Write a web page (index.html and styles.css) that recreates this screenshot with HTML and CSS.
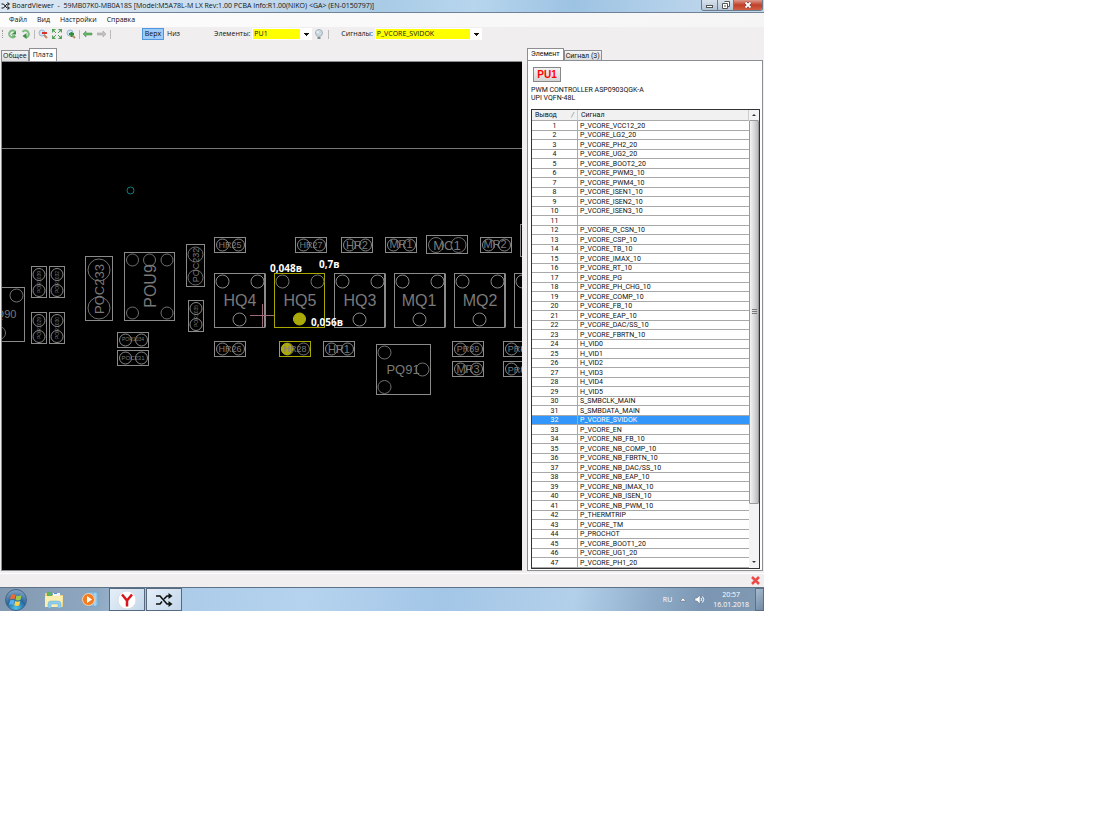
FILE: index.html
```html
<!DOCTYPE html>
<html lang="ru">
<head>
    <meta charset="UTF-8">
    <meta name="viewport" content="width=device-width, initial-scale=1.0">
    <title>BoardViewer</title>
    <link rel="stylesheet" href="styles.css">
</head>
<body>
<div class="desktop">
    <header class="titlebar">
        <svg class="app-icon" width="9" height="8" viewBox="0 0 18 16"><path d="M1 4h4l7 8h3M1 12h4l7-8h3M13 1l4 3-4 3M13 9l4 3-4 3" fill="none" stroke="#111" stroke-width="2"/></svg>
        <h1>BoardViewer&nbsp; -&nbsp; 59MB07K0-MB0A18S [Model:M5A78L-M LX Rev:1.00 PCBA Info:R1.00(NIKO) &lt;GA&gt; (EN-0150797)]</h1>
        <div class="win-buttons">
            <button class="win-btn" aria-label="Свернуть"><svg width="9" height="8"><rect x="1.500" y="4.500" width="6" height="2" fill="#fff" stroke="#555"/></svg></button>
            <button class="win-btn" aria-label="Развернуть"><svg width="9" height="8"><path d="M3.500 .5h5v5h-2M1.500 2.500h5v5h-5z" fill="#fff" stroke="#555"/><path d="M4 4v2" stroke="#555"/></svg></button>
            <button class="win-btn close" aria-label="Закрыть"><svg width="8" height="8"><path d="M1.500 1.500l5 5M6.500 1.500l-5 5" stroke="#622" stroke-width="3"/><path d="M1.500 1.500l5 5M6.500 1.500l-5 5" stroke="#fff" stroke-width="2"/></svg></button>
        </div>
    </header>

    <nav class="menu">
        <a href="#">Файл</a>
        <a href="#">Вид</a>
        <a href="#">Настройки</a>
        <a href="#">Справка</a>
    </nav>

    <div class="toolbar">
        <span class="grip"></span>
        <div class="tools">
            <button class="tool" aria-label="Повернуть влево"><svg width="10" height="10"><path d="M8.500 3A3.500 3.500 0 1 0 8.500 7" fill="none" stroke="#7cbd80" stroke-width="2"/><path d="M4 5.500h5V2z" fill="#3f9146"/><path d="M5 7h3" stroke="#3f9146"/></svg></button>
            <button class="tool" aria-label="Повернуть вправо"><svg width="10" height="10"><path d="M1.500 3A3.500 3.500 0 1 1 5 8.500" fill="none" stroke="#7cbd80" stroke-width="2"/><path d="M5.500 4v6L1.500 7z" fill="#3f9146"/></svg></button>
        </div>
        <span class="sep"></span>
        <div class="tools zoom">
            <button class="tool" aria-label="Уменьшить"><svg width="10" height="10"><circle cx="4" cy="4" r="3" fill="#cde3f5" stroke="#9bb8d0"/><path d="M6 6l3 3" stroke="#b98b62" stroke-width="2"/><path d="M4 4h5" stroke="#d9322b" stroke-width="2"/></svg></button>
            <button class="tool" aria-label="Вписать"><svg width="10" height="10"><path d="M0 0h4L0 4zM10 0v4L6 0zM0 10V6l4 4zM10 10H6l4-4z" fill="#53a45a"/><path d="M1 1l3 3M9 1L6 4M1 9l3-3M9 9L6 6" stroke="#53a45a"/></svg></button>
            <button class="tool" aria-label="Увеличить"><svg width="10" height="10"><circle cx="4" cy="4" r="3" fill="#cde3f5" stroke="#9bb8d0"/><path d="M6 6l3 3" stroke="#b98b62" stroke-width="2"/><path d="M3 5h5M5.500 3v5" stroke="#2e8f37" stroke-width="2"/></svg></button>
        </div>
        <span class="sep"></span>
        <div class="tools arrows">
            <button class="tool" aria-label="Назад"><svg width="10" height="10"><path d="M0 5l3-3v2h6v2H3v2z" fill="#67b56b" stroke="#3f8e46" stroke-width=".5"/></svg></button>
            <button class="tool" aria-label="Вперёд"><svg width="10" height="10"><path d="M9 5L6 2v2H0v2h6v2z" fill="#c4c4c4" stroke="#999" stroke-width=".5"/></svg></button>
        </div>
        <span class="sep"></span>
        <div class="sides">
            <button class="side active">Верх</button>
            <button class="side">Низ</button>
        </div>
        <label class="combo-label" for="element">Элементы:</label>
        <select class="combo" id="element"><option>PU1</option></select>
        <button class="tool lamp" aria-label="Подсветка"><svg width="10" height="11"><circle cx="5" cy="4" r="3.500" fill="#ccd9e0" stroke="#a5b3ba"/><path d="M2 3l2-1 1 2" fill="#fff"/><path d="M3.500 8h3v2h-3z" fill="#7f8f97"/></svg></button>
        <span class="sep"></span>
        <label class="combo-label signals" for="signal">Сигналы:</label>
        <select class="combo wide" id="signal"><option>P_VCORE_SVIDOK</option></select>
    </div>

    <main class="work">
        <section class="left">
            <div class="tabs">
                <button class="tab">Общее</button>
                <button class="tab active">Плата</button>
            </div>
            <div class="board">
                <svg class="pcb">
                    <defs>
                        <g id="res">
                            <rect width="31" height="15"/>
                            <circle cx="8" cy="7.500" r="6"/>
                            <circle cx="24" cy="7.500" r="6"/>
                        </g>
                        <g id="res-v">
                            <rect width="15" height="31"/>
                            <circle cx="7.500" cy="8" r="6"/>
                            <circle cx="7.500" cy="24" r="6"/>
                        </g>
                        <g id="mosfet">
                            <rect width="50" height="54"/>
                            <path d="M51 0v54"/>
                            <circle cx="8" cy="8" r="6.500"/>
                            <circle cx="43" cy="8" r="6.500"/>
                            <circle cx="25" cy="46" r="6.500"/>
                        </g>
                    </defs>
                    <g transform="translate(-2 -62)">
                        <path class="edge" d="M2 148.500H3000"/>
                        <circle class="via" cx="130.500" cy="190.500" r="3.500"/>

                        <g class="part">
                            <rect x="-30.500" y="287.500" width="55" height="54"/>
                            <circle cx="16.500" cy="295.500" r="6.500"/><circle cx="-1" cy="333" r="6.500"/>
                            <use href="#res-v" x="31.500" y="266.500"/><use href="#res-v" x="49.500" y="266.500"/>
                            <use href="#res-v" x="31.500" y="312.500"/><use href="#res-v" x="49.500" y="312.500"/>
                            <rect x="85.500" y="256.500" width="27" height="64"/>
                            <circle cx="99" cy="270" r="11"/><circle cx="99" cy="308" r="11"/>
                            <rect x="124.500" y="252.500" width="50" height="68"/>
                            <circle cx="132.500" cy="260" r="6"/><circle cx="149.500" cy="260" r="6"/><circle cx="167" cy="260" r="6"/>
                            <circle cx="132.500" cy="313" r="6"/><circle cx="167" cy="313" r="6"/>
                            <rect x="186.500" y="244.500" width="18" height="42"/>
                            <circle cx="195.500" cy="254.500" r="7.500"/><circle cx="195.500" cy="277.500" r="7.500"/>
                            <use href="#res-v" x="188.500" y="300.500"/>
                            <use href="#res" x="117.500" y="332.500"/><use href="#res" x="117.500" y="350.500"/>

                            <use href="#res" x="214.500" y="237.500"/><use href="#res" x="295.500" y="237.500"/>
                            <use href="#res" x="341.500" y="237.500"/><use href="#res" x="385.500" y="237.500"/>
                            <rect x="426.500" y="235.500" width="41" height="18"/>
                            <circle cx="436" cy="245" r="7.500"/><circle cx="458.500" cy="245" r="7.500"/>
                            <use href="#res" x="480.500" y="237.500"/>
                            <rect x="520.500" y="224.500" width="40" height="32"/>

                            <use href="#mosfet" x="214.500" y="273.500"/><use href="#mosfet" x="334.500" y="273.500"/>
                            <use href="#mosfet" x="394.500" y="273.500"/><use href="#mosfet" x="454.500" y="273.500"/>
                            <use href="#mosfet" x="514.500" y="273.500"/>

                            <use href="#res" x="214.500" y="341.500"/><use href="#res" x="323.500" y="341.500"/>
                            <use href="#res" x="452.500" y="341.500"/><use href="#res" x="452.500" y="361.500"/>
                            <use href="#res" x="503.500" y="341.500"/><use href="#res" x="503.500" y="361.500"/>
                            <rect x="376.500" y="344.500" width="54" height="50"/>
                            <circle cx="384.500" cy="352.500" r="6.500"/><circle cx="422.500" cy="369.500" r="6.500"/><circle cx="384.500" cy="387" r="6.500"/>
                        </g>

                        <!-- selected net -->
                        <g class="part hot">
                            <use href="#res" x="279.500" y="341.500" class="dim"/>
                            <rect x="274.500" y="273.500" width="50" height="54"/>
                            <rect x="279.500" y="341.500" width="31" height="15"/>
                            <circle class="dim" cx="282.500" cy="281.500" r="6.500"/><circle class="dim" cx="317.500" cy="281.500" r="6.500"/>
                            <circle class="pad" cx="299.500" cy="319" r="6"/><circle class="pad" cx="287" cy="349" r="5.500"/>
                        </g>
                        <path class="cursor" d="M250 315.500h24M262.500 304v23"/>

                        <g class="label xs">
                            <text transform="translate(41 282) rotate(-90)">POR1039</text>
                            <text transform="translate(59 282) rotate(-90)">POR1032</text>
                            <text transform="translate(41 328) rotate(-90)">POR1029</text>
                            <text transform="translate(59 328) rotate(-90)">POR1030</text>
                            <text transform="translate(198 316) rotate(-90)">POR1035</text>
                            <text x="133" y="341">POR1034</text>
                        </g>
                        <text class="label xs2" x="133" y="360">POC231</text>
                        <g class="label s">
                            <text transform="translate(199 265) rotate(-90)">POC232</text>
                            <text x="468" y="352">PR89</text>
                            <text x="519" y="352">PR88</text>
                            <text x="519" y="373">PR87</text>
                            <text x="230" y="248">HR25</text>
                            <text x="311" y="248">HR27</text>
                            <text x="230" y="352">HR26</text>
                            <text x="295" y="352">HR28</text>
                        </g>
                        <g class="label m">
                            <text x="357" y="249">HR2</text>
                            <text x="401" y="248">MR1</text>
                            <text x="495" y="248">MR2</text>
                            <text x="339" y="353">HR1</text>
                            <text x="468" y="373">MR3</text>
                            <text x="6" y="318">Q90</text>
                        </g>
                        <g class="label l">
                            <text x="447" y="250">MC1</text>
                            <text x="403" y="374">PQ91</text>
                            <text transform="translate(104 289) rotate(-90)">POC233</text>
                        </g>
                        <g class="label xl">
                            <text x="240" y="306">HQ4</text>
                            <text x="300" y="306">HQ5</text>
                            <text x="360" y="306">HQ3</text>
                            <text x="419" y="306">MQ1</text>
                            <text x="480" y="306">MQ2</text>
                            <text transform="translate(156 286) rotate(-90)">POU9</text>
                        </g>
                        <g class="note">
                            <text x="270" y="272">0,048в</text>
                            <text x="319" y="268">0,7в</text>
                            <text x="311" y="326">0,056в</text>
                        </g>
                    </g>
                </svg>
            </div>
        </section>

        <section class="right">
            <div class="tabs">
                <button class="tab active">Элемент</button>
                <button class="tab">Сигнал (3)</button>
            </div>
            <div class="panel">
                <button class="part-btn">PU1</button>
                <p class="desc">PWM CONTROLLER ASP0903QGK-A<br>UPI VQFN-48L</p>
                <div class="list">
                    <div class="list-view">
                        <table class="pins">
                            <thead><tr><th class="num">Вывод <i>/</i></th><th>Сигнал</th></tr></thead>
                            <tbody>
                                <tr><td>1</td><td><span>P_VCORE_VCC12_20</span></td></tr>
                                <tr><td>2</td><td><span>P_VCORE_LG2_20</span></td></tr>
                                <tr><td>3</td><td><span>P_VCORE_PH2_20</span></td></tr>
                                <tr><td>4</td><td><span>P_VCORE_UG2_20</span></td></tr>
                                <tr><td>5</td><td><span>P_VCORE_BOOT2_20</span></td></tr>
                                <tr><td>6</td><td><span>P_VCORE_PWM3_10</span></td></tr>
                                <tr><td>7</td><td><span>P_VCORE_PWM4_10</span></td></tr>
                                <tr><td>8</td><td><span>P_VCORE_ISEN1_10</span></td></tr>
                                <tr><td>9</td><td><span>P_VCORE_ISEN2_10</span></td></tr>
                                <tr><td>10</td><td><span>P_VCORE_ISEN3_10</span></td></tr>
                                <tr><td>11</td><td></td></tr>
                                <tr><td>12</td><td><span>P_VCORE_R_CSN_10</span></td></tr>
                                <tr><td>13</td><td><span>P_VCORE_CSP_10</span></td></tr>
                                <tr><td>14</td><td><span>P_VCORE_TB_10</span></td></tr>
                                <tr><td>15</td><td><span>P_VCORE_IMAX_10</span></td></tr>
                                <tr><td>16</td><td><span>P_VCORE_RT_10</span></td></tr>
                                <tr><td>17</td><td><span>P_VCORE_PG</span></td></tr>
                                <tr><td>18</td><td><span>P_VCORE_PH_CHG_10</span></td></tr>
                                <tr><td>19</td><td><span>P_VCORE_COMP_10</span></td></tr>
                                <tr><td>20</td><td><span>P_VCORE_FB_10</span></td></tr>
                                <tr><td>21</td><td><span>P_VCORE_EAP_10</span></td></tr>
                                <tr><td>22</td><td><span>P_VCORE_DAC/SS_10</span></td></tr>
                                <tr><td>23</td><td><span>P_VCORE_FBRTN_10</span></td></tr>
                                <tr><td>24</td><td><span>H_VID0</span></td></tr>
                                <tr><td>25</td><td><span>H_VID1</span></td></tr>
                                <tr><td>26</td><td><span>H_VID2</span></td></tr>
                                <tr><td>27</td><td><span>H_VID3</span></td></tr>
                                <tr><td>28</td><td><span>H_VID4</span></td></tr>
                                <tr><td>29</td><td><span>H_VID5</span></td></tr>
                                <tr><td>30</td><td><span>S_SMBCLK_MAIN</span></td></tr>
                                <tr><td>31</td><td><span>S_SMBDATA_MAIN</span></td></tr>
                                <tr class="selected"><td>32</td><td><span>P_VCORE_SVIDOK</span></td></tr>
                                <tr><td>33</td><td><span>P_VCORE_EN</span></td></tr>
                                <tr><td>34</td><td><span>P_VCORE_NB_FB_10</span></td></tr>
                                <tr><td>35</td><td><span>P_VCORE_NB_COMP_10</span></td></tr>
                                <tr><td>36</td><td><span>P_VCORE_NB_FBRTN_10</span></td></tr>
                                <tr><td>37</td><td><span>P_VCORE_NB_DAC/SS_10</span></td></tr>
                                <tr><td>38</td><td><span>P_VCORE_NB_EAP_10</span></td></tr>
                                <tr><td>39</td><td><span>P_VCORE_NB_IMAX_10</span></td></tr>
                                <tr><td>40</td><td><span>P_VCORE_NB_ISEN_10</span></td></tr>
                                <tr><td>41</td><td><span>P_VCORE_NB_PWM_10</span></td></tr>
                                <tr><td>42</td><td><span>P_THERMTRIP</span></td></tr>
                                <tr><td>43</td><td><span>P_VCORE_TM</span></td></tr>
                                <tr><td>44</td><td><span>P_PROCHOT</span></td></tr>
                                <tr><td>45</td><td><span>P_VCORE_BOOT1_20</span></td></tr>
                                <tr><td>46</td><td><span>P_VCORE_UG1_20</span></td></tr>
                                <tr><td>47</td><td><span>P_VCORE_PH1_20</span></td></tr>
                            </tbody>
                        </table>
                    </div>
                    <div class="scroll">
                        <button class="scroll-btn" aria-label="Вверх"><svg width="6" height="4"><path d="M1 3l2-2 2 2z" fill="#333"/></svg></button>
                        <div class="thumb"><svg width="5" height="6"><path d="M0 .5h5M0 2.500h5M0 4.500h5" stroke="#777"/></svg></div>
                        <button class="scroll-btn" aria-label="Вниз"><svg width="6" height="4"><path d="M1 1l2 2 2-2z" fill="#333"/></svg></button>
                    </div>
                </div>
            </div>
        </section>
    </main>

    <div class="status">
        <button class="tool" aria-label="Сбросить"><svg width="9" height="9"><path d="M1 1l7 7M8 1L1 8" stroke="#ec4a4a" stroke-width="2.500"/></svg></button>
    </div>

    <footer class="taskbar">
        <button class="start" aria-label="Пуск">
            <svg width="22" height="22">
                <defs><radialGradient id="orb" cx=".5" cy=".9" r=".9"><stop offset="0" stop-color="#4fc4ea"/><stop offset=".5" stop-color="#28679f"/><stop offset="1" stop-color="#8ba9c4"/></radialGradient></defs>
                <circle cx="11" cy="11" r="10.500" fill="url(#orb)" stroke="#44658a"/>
                <path d="M6 6q2.500-1.500 4.500 0l-1 4.500q-2-1.300-4.500 0z" fill="#ee6a34"/>
                <path d="M11.500 6.500q2.500 1.300 5-.2l-1 4.500q-2.500 1.400-5 0z" fill="#9bcb4d"/>
                <path d="M5 11.500q2.500-1.300 4.500 0l-1 4.500q-2-1.300-4.500 0z" fill="#58aee8"/>
                <path d="M10.300 12q2.500 1.300 5 0l-1 4.300q-2.500 1.500-5 0z" fill="#fbd34b"/>
            </svg>
        </button>
        <button class="task" aria-label="Проводник">
            <svg width="20" height="18"><path d="M1 2h6l1 2h11v12H1z" fill="#e9cf77"/><path d="M3 1h5v4H3z" fill="#5fb262"/><path d="M9 2h7v3H9z" fill="#f3f6f4"/><path d="M10 2h3v1h-3z" fill="#4b93d4"/><path d="M1 5h18l-1 11H1z" fill="#fbeeae"/><path d="M4 17v-4q0-3 3-3h7q3 0 3 3v4h-3v-4H7v4z" fill="#8ecbea" stroke="#6eb0d6" stroke-width=".5"/></svg>
        </button>
        <button class="task" aria-label="Проигрыватель">
            <svg width="17" height="17"><path d="M5 1h10l1 1v13H5z" fill="#8ec3e6" stroke="#6da8d0"/><path d="M13 2v13" stroke="#b9dff5"/><circle cx="6.500" cy="8.500" r="6" fill="#f47b20" stroke="#fbd0a8"/><path d="M5 5l5 3.500L5 12z" fill="#fff"/></svg>
        </button>
        <button class="task open" aria-label="Яндекс">
            <svg width="20" height="20"><circle cx="10" cy="10" r="9" fill="#fff" stroke="#dadfe4"/><path d="M5 4.500l5 6 5-6M10 10v6.500" fill="none" stroke="#d8141c" stroke-width="2.500"/></svg>
        </button>
        <button class="task open" aria-label="BoardViewer">
            <svg width="18" height="14" viewBox="0 0 18 14"><path d="M1 3h4l7 8h4M1 11h4l2-2.500M9 6l3-3h4" fill="none" stroke="#111" stroke-width="1.600"/><path d="M13.500 0l4 3-4 3zM13.500 8l4 3-4 3z" fill="#111"/></svg>
        </button>
        <div class="tray">
            <span class="lang">RU</span>
            <svg width="6" height="5"><path d="M0 4l3-3 3 3z" fill="#fff" stroke="#667" stroke-width=".5"/></svg>
            <svg class="sound" width="11" height="9"><path d="M1 3h2l3-3v9L3 6H1z" fill="#fff" stroke="#667" stroke-width=".5"/><path d="M7 3q1 1.500 0 3M8.500 1.500q2.500 3 0 6" fill="none" stroke="#fff"/></svg>
            <div class="clock"><time>20:57</time><time>16.01.2018</time></div>
        </div>
        <button class="show-desktop" aria-label="Показать рабочий стол"></button>
    </footer>
</div>
</body>
</html>
```
FILE: styles.css
```css
* {
    box-sizing: border-box;
}
body {
    margin: 0;
    background: #fff;
    color: #111;
    font: 7px/10px "Open Sans", "Noto Sans", sans-serif;
}
button, select {
    font: inherit;
    color: inherit;
    margin: 0;
    padding: 0;
    border: 0;
    background: none;
}
svg {
    display: block;
}
a {
    color: inherit;
    text-decoration: none;
}
.desktop {
    width: calc(100% - 336px);
    min-width: 600px;
    background: #f0eeee;
}

/* title bar */
.titlebar {
    display: flex;
    align-items: center;
    height: 13px;
    padding: 0 1px;
    background: linear-gradient(100deg, #dce8f3 0%, #c9dcee 30%, #a9cbe6 50%, #b7d5ed 62%, #9dc3e3 75%, #b5d1ea 88%, #c4d9ec 100%);
    border-bottom: 1px solid #6f8296;
}
.titlebar h1 {
    flex: 1;
    margin: 0 0 0 2px;
    font-size: 7px;
    font-weight: 400;
    line-height: 12px;
    white-space: nowrap;
}
.win-buttons {
    display: flex;
    align-self: flex-start;
    border: 1px solid #6b7b8c;
    border-top: 0;
    border-radius: 0 0 3px 3px;
    overflow: hidden;
}
.win-btn {
    display: grid;
    place-items: center;
    width: 16px;
    height: 10px;
    background: linear-gradient(#d8e2ec, #b3c5d6);
    border-right: 1px solid #6b7b8c;
}
.win-btn.close {
    width: 28px;
    background: linear-gradient(#dc9a8c, #c2402a 50%, #cf6043);
    border-right: 0;
}

/* menu and toolbar */
.menu {
    display: flex;
    gap: 10px;
    height: 14px;
    padding: 2px 9px;
    background: linear-gradient(90deg, #fdfdfd, #f5f5f5);
}
.toolbar {
    display: flex;
    align-items: center;
    height: 15px;
    padding: 0 0 1px 2px;
}
.grip {
    height: 8px;
    border-left: 1px dotted #999;
}
.tools {
    display: flex;
    gap: 4px;
    margin: 0 3px 0 4px;
}
.tools.zoom, .tools.arrows {
    margin: 0 3px;
}
.sep {
    height: 9px;
    border-left: 1px solid #bbb;
}
.sides {
    display: flex;
    margin-left: 31px;
}
.side {
    width: 19px;
    height: 12px;
    line-height: 10px;
}
.side.active {
    width: 22px;
    background: #9ccbf9;
    border: 1px solid #4f96dc;
}
.combo-label {
    margin: 0 2px 0 31px;
}
.combo-label.signals {
    margin-left: 12px;
}
.combo {
    appearance: none;
    width: 60px;
    height: 12px;
    padding-left: 2px;
    background:
        linear-gradient(#111, #111) right 3px top 5px / 5px 1px no-repeat,
        linear-gradient(#111, #111) right 4px top 6px / 3px 1px no-repeat,
        linear-gradient(#111, #111) right 5px top 7px / 1px 1px no-repeat,
        linear-gradient(#ff0, #ff0) 1px 1px / calc(100% - 13px) 10px no-repeat,
        #fff;
}
.combo.wide {
    width: 107px;
}
.lamp {
    margin: 0 4px 0 2px;
}

/* work area */
.work {
    display: flex;
    gap: 5px;
    padding: 6px 1px 2px;
}
.left, .right {
    display: flex;
    flex-direction: column;
}
.left {
    flex: 1;
    min-width: 0;
}
.right {
    width: 236px;
}
.tabs {
    display: flex;
    align-items: flex-end;
    height: 13px;
}
.right .tabs {
    height: 12px;
}
.tab {
    height: 11px;
    padding: 0 1px;
    font-family: Roboto, "Liberation Sans", sans-serif;
    line-height: 10px;
    background: linear-gradient(#f4f4f4, #ddd);
    border: 1px solid #8c8e94;
    border-bottom: 0;
}
.right .tab {
    height: 10px;
}
.tabs .tab.active {
    height: 100%;
    padding: 0 3px 1px;
    background: #fff;
}
.left .tab {
    font-family: inherit;
}
.board {
    flex: 1;
    display: flex;
    flex-direction: column;
    background: #000;
    border: 1px solid #8c8e94;
    border-width: 1px 0 1px 1px;
}
.pcb {
    flex: 1;
    width: 100%;
    min-height: 0;
    overflow: hidden;
}
.panel {
    flex: 1;
    padding: 6px 2px 1px 3px;
    background: #fff;
    border: 1px solid #8c8e94;
}
.part-btn {
    display: block;
    width: 28px;
    height: 15px;
    margin-left: 2px;
    color: #f00;
    font: bold 10px/12px "Liberation Sans", sans-serif;
    background: linear-gradient(#f2f2f2, #d4d4d4);
    border: 1px solid #888;
}
.desc {
    margin: 4px 0 7px;
    font: 7px/8px Roboto, "Liberation Sans", sans-serif;
}
.list {
    display: flex;
    height: 460px;
    border: 1px solid #333;
    font-family: Roboto, "Liberation Sans", sans-serif;
}
.list-view {
    flex: 1;
    overflow: hidden;
}
.pins {
    width: 100%;
    table-layout: fixed;
    border-collapse: separate;
    border-spacing: 0;
    line-height: 8px;
}
.pins th {
    height: 11px;
    padding: 0 3px;
    font-weight: 400;
    text-align: left;
    background: #f1f1f1;
    border-bottom: 1px solid #aaa;
    border-right: 1px solid #ccc;
}
.pins .num {
    width: 46px;
}
.num i {
    float: right;
    color: #777;
}
.pins td {
    height: 9px;
    padding: 0 2px;
    border-bottom: 1px solid #a8a8a8;
    overflow: hidden;
}
.pins tr:nth-child(odd) td {
    height: 10px;
}
.pins td:first-child {
    text-align: center;
    border-right: 1px solid #a8a8a8;
}
.pins span {
    display: block;
    height: 7px;
    margin-bottom: 1px;
    overflow: hidden;
}
.selected {
    color: #fff;
    background: #3296fa;
}

/* scroll bar */
.scroll {
    display: flex;
    flex-direction: column;
    width: 10px;
    padding-bottom: 1px;
    background: #f3f3f3;
}
.scroll-btn {
    display: grid;
    place-items: center;
    height: 10px;
}
.scroll-btn:last-child {
    margin-top: auto;
}
.thumb {
    display: grid;
    place-items: center;
    height: 84%;
    background: linear-gradient(90deg, #f3f3f3, #dadada 50%, #b9b9b9);
    border: 1px solid #999;
    border-radius: 1px;
}

/* board drawing */
.part {
    fill: none;
    stroke: #8a8a8a;
}
.part circle {
    stroke: #707070;
}
.part.hot {
    stroke: #a8a800;
}
.part .dim {
    stroke: #777;
}
.part .pad {
    fill: #aaaa0a;
    stroke: #b4b400;
}
.edge {
    stroke: #777;
}
.via {
    fill: none;
    stroke: #0b8080;
}
.cursor {
    stroke: #a06a78;
}
.label {
    fill: #7a7a7a;
    font-family: "Liberation Sans", Arial, sans-serif;
    text-anchor: middle;
}
.xs { font-size: 5px; }
.xs2 { font-size: 6px; }
.s { font-size: 9px; }
.m { font-size: 11px; }
.l { font-size: 13px; }
.xl { font-size: 16px; }
.note {
    fill: #fff;
    font: bold 10px "Open Sans", "Noto Sans", sans-serif;
}

/* status and taskbar */
.status {
    display: flex;
    justify-content: flex-end;
    align-items: center;
    height: 14px;
    padding-right: 4px;
    border-top: 1px solid #fff;
}
.taskbar {
    display: flex;
    align-items: center;
    height: 24px;
    background: linear-gradient(100deg, #8298b0 0%, #8fa8c1 13%, #a9c9e7 20%, #b5d3ee 40%, #a3c6e7 58%, #b3d0ea 75%, #8fadca 85%, #7b96b2 92%, #8099b3 100%);
    border-top: 1px solid #5f7388;
}
.start {
    margin: 0 9px 0 5px;
}
.task {
    display: grid;
    place-items: center;
    width: 36px;
    height: 23px;
}
.task.open {
    margin-left: 1px;
    background: linear-gradient(135deg, #e6eff8, #c3d7eb);
    border: 1px solid #56697e;
}
.tray {
    display: flex;
    align-items: center;
    gap: 8px;
    margin-left: auto;
    color: #fff;
}
.clock {
    display: grid;
    text-align: center;
}
.show-desktop {
    width: 9px;
    height: 23px;
    margin-left: 6px;
    background: linear-gradient(135deg, #a9bccf, #6f89a4);
    border: 1px solid #5c7188;
}
```
